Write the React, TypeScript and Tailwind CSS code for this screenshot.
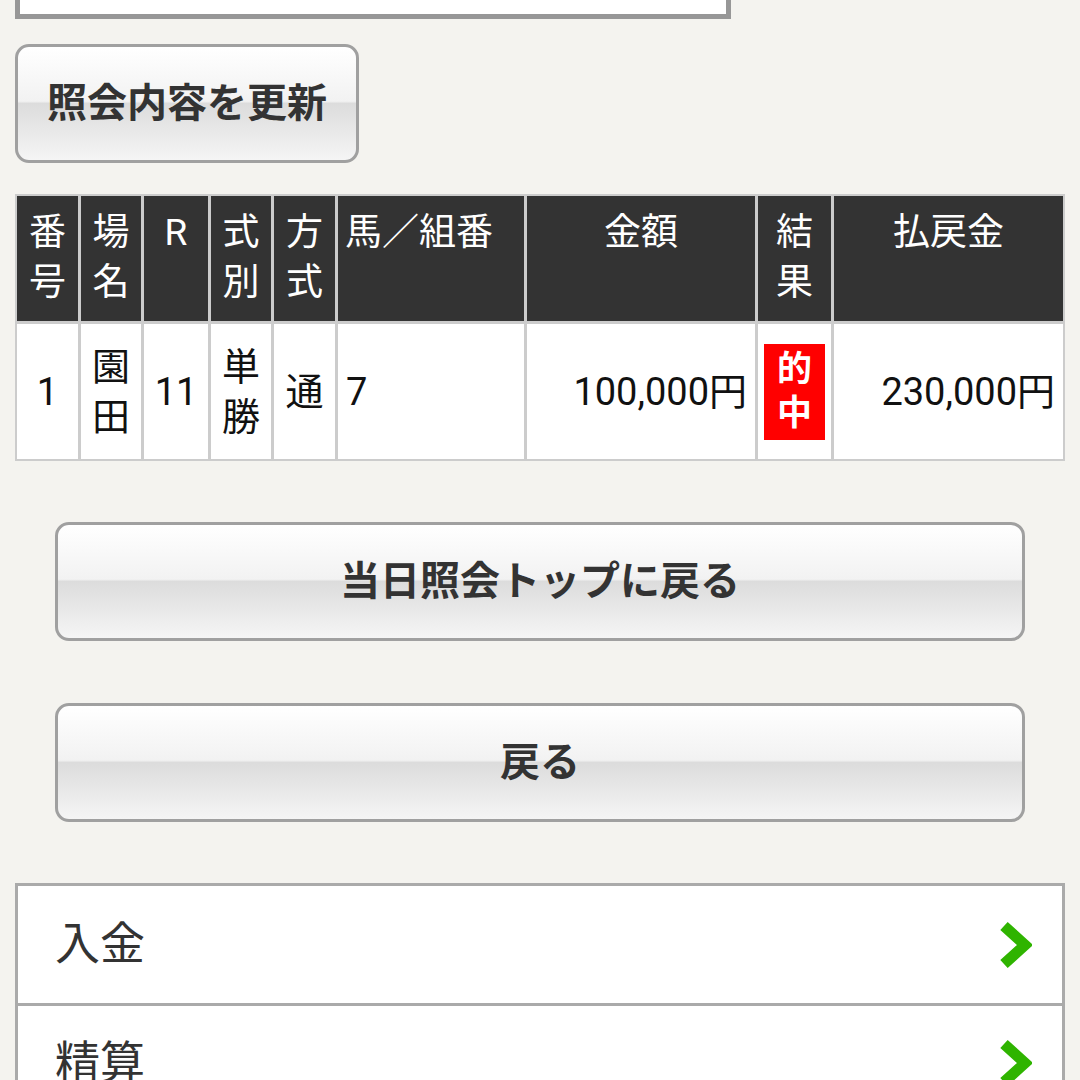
import React from 'react';

const glossy =
  'bg-[linear-gradient(to_bottom,#ffffff_0%,#f2f2f2_48%,#dcdcdc_50%,#e6e6e6_70%,#f5f5f5_100%)]';

function GlossButton({ label, className }: { label: string; className?: string }) {
  return (
    <button
      type="button"
      className={`h-[119px] rounded-[14px] border-[3px] border-[#a0a0a0] ${glossy} text-[40px] font-bold leading-none text-[#333] ${className ?? ''}`}
    >
      {label}
    </button>
  );
}

function Chevron() {
  return (
    <svg width="34" height="48" viewBox="0 0 34 48" className="shrink-0">
      <polyline
        points="6,5 27,24 6,43"
        fill="none"
        stroke="#2fb400"
        strokeWidth="11"
        strokeLinejoin="miter"
        strokeLinecap="butt"
      />
    </svg>
  );
}

const headers: { lines: string[]; align?: 'left' }[] = [
  { lines: ['番', '号'] },
  { lines: ['場', '名'] },
  { lines: ['R'] },
  { lines: ['式', '別'] },
  { lines: ['方', '式'] },
  { lines: ['馬／組番'], align: 'left' },
  { lines: ['金額'] },
  { lines: ['結', '果'] },
  { lines: ['払戻金'] },
];

export default function App() {
  return (
    <div className="min-h-[1080px] w-[1080px] overflow-hidden bg-[#f4f3ef] font-['Roboto','Noto_Sans_CJK_JP',sans-serif]">
      {/* bottom edge of the form field above */}
      <div className="ml-[15px] h-[19px] w-[716px] border-[5px] border-t-0 border-[#979797] bg-white" />

      <div className="mt-[25px] px-[15px]">
        <GlossButton label="照会内容を更新" className="w-[344px]" />
      </div>

      {/* result table */}
      <div className="mx-[15px] mt-[31px] grid w-[1050px] grid-cols-[61px_60px_64px_60px_61px_186px_228px_73px_229px] gap-[3px] bg-[#cccccc] p-[2px]">
        {headers.map((h, i) => (
          <div
            key={i}
            className={`h-[125px] bg-[#333333] pt-[12px] text-[37px] leading-[50px] text-white ${
              h.align === 'left' ? 'pl-[7px] text-left' : 'text-center'
            }`}
          >
            {h.lines.map((l) => (
              <div key={l}>{l}</div>
            ))}
          </div>
        ))}

        <div className="flex h-[135px] items-center justify-center bg-white text-[38px] leading-[50px] text-[#111]">1</div>
        <div className="flex h-[135px] flex-col items-center justify-center bg-white text-[38px] leading-[50px] text-[#111]">
          <div>園</div>
          <div>田</div>
        </div>
        <div className="flex h-[135px] items-center justify-center bg-white text-[38px] leading-[50px] text-[#111]">11</div>
        <div className="flex h-[135px] flex-col items-center justify-center bg-white text-[38px] leading-[50px] text-[#111]">
          <div>単</div>
          <div>勝</div>
        </div>
        <div className="flex h-[135px] items-center justify-center bg-white text-[38px] leading-[50px] text-[#111]">通</div>
        <div className="flex h-[135px] items-center bg-white pl-[8px] text-[38px] leading-[50px] text-[#111]">7</div>
        <div className="flex h-[135px] items-center justify-end bg-white pr-[8px] text-[38px] leading-[50px] text-[#111]">100,000円</div>
        <div className="flex h-[135px] items-center justify-center bg-white">
          <div className="flex h-[96px] w-[61px] flex-col items-center justify-center bg-[#ff0000] text-[35px] font-bold leading-[44px] text-white">
            <div>的</div>
            <div>中</div>
          </div>
        </div>
        <div className="flex h-[135px] items-center justify-end bg-white pr-[8px] text-[38px] leading-[50px] text-[#111]">230,000円</div>
      </div>

      <div className="mt-[61px] flex flex-col gap-[62px] px-[55px]">
        <GlossButton label="当日照会トップに戻る" className="w-full" />
        <GlossButton label="戻る" className="w-full" />
      </div>

      {/* menu list */}
      <div className="mx-[15px] mt-[61px] w-[1050px] border-[3px] border-[#aaaaaa] bg-white">
        {['入金', '精算'].map((label, i) => (
          <div
            key={label}
            className={`flex h-[117px] items-center justify-between pl-[37px] pr-[30px] ${
              i > 0 ? 'border-t-[3px] border-[#aaaaaa]' : ''
            }`}
          >
            <span className="text-[45px] leading-none text-[#333]">{label}</span>
            <Chevron />
          </div>
        ))}
      </div>
    </div>
  );
}
